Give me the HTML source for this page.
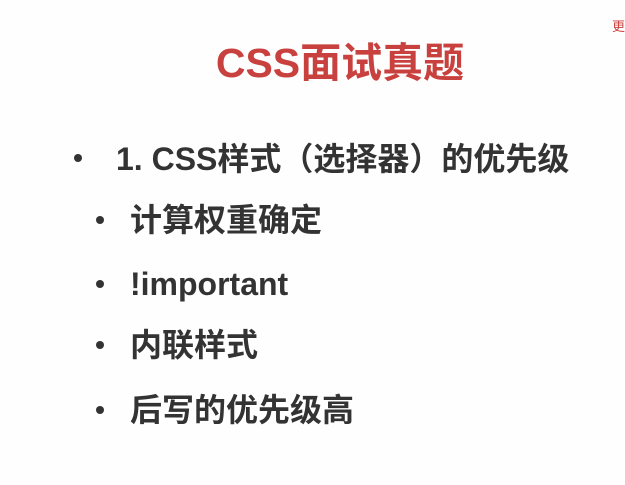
<!DOCTYPE html>
<html><head><meta charset="utf-8"><style>
body{margin:0;width:625px;height:485px;background:#fefefe;position:relative;overflow:hidden;font-family:"Liberation Sans","Noto Sans CJK SC",sans-serif;font-weight:bold;color:#333}
.t{position:absolute;left:0;width:680px;text-align:center;top:39px;font-size:41px;line-height:48px;color:#c9413f}
.l{position:absolute;white-space:nowrap;line-height:40px}
.b{position:absolute;width:8px;height:8px;border-radius:50%;background:#333}
.m{position:absolute;left:612px;top:16px;font-size:13px;color:#c9413f;font-weight:normal}
</style></head><body>
<div class="m">更</div>
<div class="t">CSS面试真题</div>
<div class="b" style="left:74px;top:154px"></div>
<div class="l" style="left:116px;top:139px;font-size:32px">1. CSS样式（选择器）的优先级</div>
<div class="b" style="left:96px;top:216px"></div>
<div class="l" style="left:130px;top:200px;font-size:32px">计算权重确定</div>
<div class="b" style="left:96px;top:280px"></div>
<div class="l" style="left:130px;top:264px;font-size:32px">!important</div>
<div class="b" style="left:96px;top:341px"></div>
<div class="l" style="left:130px;top:325px;font-size:32px">内联样式</div>
<div class="b" style="left:96px;top:406px"></div>
<div class="l" style="left:130px;top:390px;font-size:32px">后写的优先级高</div>
</body></html>
